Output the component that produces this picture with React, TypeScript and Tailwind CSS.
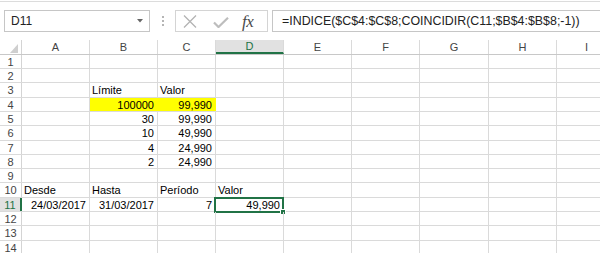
import React from "react";

type Cell = { v: string; right?: boolean; fill?: boolean };

const COLS = [
  { key: "A", w: "w-[68px]" },
  { key: "B", w: "w-[68px]" },
  { key: "C", w: "w-[58px]" },
  { key: "D", w: "w-[68px]" },
  { key: "E", w: "w-[68px]" },
  { key: "F", w: "w-[68px]" },
  { key: "G", w: "w-[69px]" },
  { key: "H", w: "w-[68px]" },
  { key: "I", w: "w-[60px]" },
];

// row heights alternate 14/15 to land on the ~14.3px grid of the capture
const ROWS: { n: number; h: string; cells: Record<string, Cell> }[] = [
  { n: 1, h: "h-[14px]", cells: {} },
  { n: 2, h: "h-[14px]", cells: {} },
  { n: 3, h: "h-[15px]", cells: { B: { v: "Límite" }, C: { v: "Valor" } } },
  { n: 4, h: "h-[14px]", cells: { B: { v: "100000", right: true, fill: true }, C: { v: "99,990", right: true, fill: true } } },
  { n: 5, h: "h-[14px]", cells: { B: { v: "30", right: true }, C: { v: "99,990", right: true } } },
  { n: 6, h: "h-[15px]", cells: { B: { v: "10", right: true }, C: { v: "49,990", right: true } } },
  { n: 7, h: "h-[14px]", cells: { B: { v: "4", right: true }, C: { v: "24,990", right: true } } },
  { n: 8, h: "h-[14px]", cells: { B: { v: "2", right: true }, C: { v: "24,990", right: true } } },
  { n: 9, h: "h-[14px]", cells: {} },
  { n: 10, h: "h-[15px]", cells: { A: { v: "Desde" }, B: { v: "Hasta" }, C: { v: "Período" }, D: { v: "Valor" } } },
  {
    n: 11,
    h: "h-[14px]",
    cells: {
      A: { v: "24/03/2017", right: true },
      B: { v: "31/03/2017", right: true },
      C: { v: "7", right: true },
      D: { v: "49,990", right: true },
    },
  },
  { n: 12, h: "h-[14px]", cells: {} },
  { n: 13, h: "h-[15px]", cells: {} },
  { n: 14, h: "h-[14px]", cells: {} },
];

function FormulaBar() {
  return (
    <div className="flex items-start mt-[8px] h-[30px]">
      {/* Name box */}
      <div className="ml-[4px] w-[146px] h-[22px] border border-[#c6c6c6] flex items-center pl-[6px] text-[12px] text-[#222]">
        <span>D11</span>
        <svg className="ml-auto mr-[6px]" width="6" height="4" viewBox="0 0 6 4">
          <path d="M0 0 L6 0 L3 3.5 Z" fill="#666" />
        </svg>
      </div>

      {/* grip dots */}
      <div className="ml-[12px] h-[22px] flex flex-col justify-center gap-[2px]">
        <span className="block w-[2px] h-[2px] bg-[#b5b5b5]" />
        <span className="block w-[2px] h-[2px] bg-[#b5b5b5]" />
        <span className="block w-[2px] h-[2px] bg-[#b5b5b5]" />
      </div>

      {/* cancel / enter / fx */}
      <div className="ml-[11px] w-[93px] h-[22px] border border-[#d4d4d4] flex items-center">
        <svg className="ml-[7px]" width="14" height="13" viewBox="0 0 14 13">
          <path d="M1 0.5 L13 12.5 M13 0.5 L1 12.5" stroke="#b3b3b3" strokeWidth="1.3" fill="none" />
        </svg>
        <svg className="ml-[16px] mt-[2px]" width="16" height="11" viewBox="0 0 16 11">
          <path d="M1 5.5 L5.5 10 L15 0.8" stroke="#bdbdbd" strokeWidth="2.2" fill="none" />
        </svg>
        <span className="ml-[13px] font-['Liberation_Serif',serif] italic text-[17px] leading-none text-[#4a4a4a] tracking-[-0.5px]">
          fx
        </span>
      </div>

      {/* formula */}
      <div className="ml-[4px] flex-1 h-[22px] border border-r-0 border-[#c6c6c6] flex items-center pl-[9px] text-[12.4px] text-[#222] whitespace-nowrap overflow-hidden">
        =INDICE($C$4:$C$8;COINCIDIR(C11;$B$4:$B$8;-1))
      </div>
    </div>
  );
}

function HeaderRow() {
  return (
    <div className="flex h-[15px] border-b border-[#c8c8c8]">
      <div className="w-[22px] shrink-0 border-r border-[#d4d4d4] flex items-end justify-end pr-[3px] pb-[1px]">
        <svg width="8" height="9" viewBox="0 0 8 9">
          <path d="M8 0 L8 9 L0 9 Z" fill="#cfcfcf" />
        </svg>
      </div>
      {COLS.map((c) => (
        <div
          key={c.key}
          className={`${c.w} shrink-0 border-r border-[#dadada] flex items-center justify-center text-[11px] leading-[14px] ${
            c.key === "D" ? "bg-[#e1e1e1] text-[#217346] border-b-2 border-b-[#217346]" : "text-[#444]"
          }`}
        >
          {c.key}
        </div>
      ))}
    </div>
  );
}

export default function App() {
  return (
    <div className="w-[600px] h-[253px] bg-white overflow-hidden font-['Liberation_Sans',Arial,sans-serif]">
      <div className="h-[2px] border-b border-[#dcdcdc]" />
      <FormulaBar />
      <HeaderRow />
      {ROWS.map((r) => {
        const active = r.n === 11;
        return (
          <div key={r.n} className={`flex ${r.h} border-b border-[#dadada]`}>
            <div
              className={`w-[22px] shrink-0 flex items-center justify-center text-[11px] leading-[14px] ${
                active
                  ? "bg-[#e1e1e1] text-[#217346] border-r-2 border-[#217346]"
                  : "text-[#444] border-r border-[#d4d4d4]"
              }`}
            >
              {r.n}
            </div>
            {COLS.map((c) => {
              const cell = r.cells[c.key];
              const selected = active && c.key === "D";
              return (
                <div
                  key={c.key}
                  className={`${c.w} shrink-0 relative flex items-center text-[11px] leading-[14px] text-black whitespace-nowrap ${
                    cell?.right ? "justify-end pr-[3px]" : "pl-[2px]"
                  } ${cell?.fill ? "bg-[#ffff00] border-r border-[#ffff00]" : "border-r border-[#dadada]"}`}
                >
                  {cell?.v}
                  {selected && (
                    <div className="absolute -left-[2px] -top-[1px] -right-[1px] -bottom-[2px] border-2 border-[#217346]">
                      <div className="absolute -right-[4px] -bottom-[4px] w-[6px] h-[6px] bg-[#217346] border border-white" />
                    </div>
                  )}
                </div>
              );
            })}
          </div>
        );
      })}
    </div>
  );
}
